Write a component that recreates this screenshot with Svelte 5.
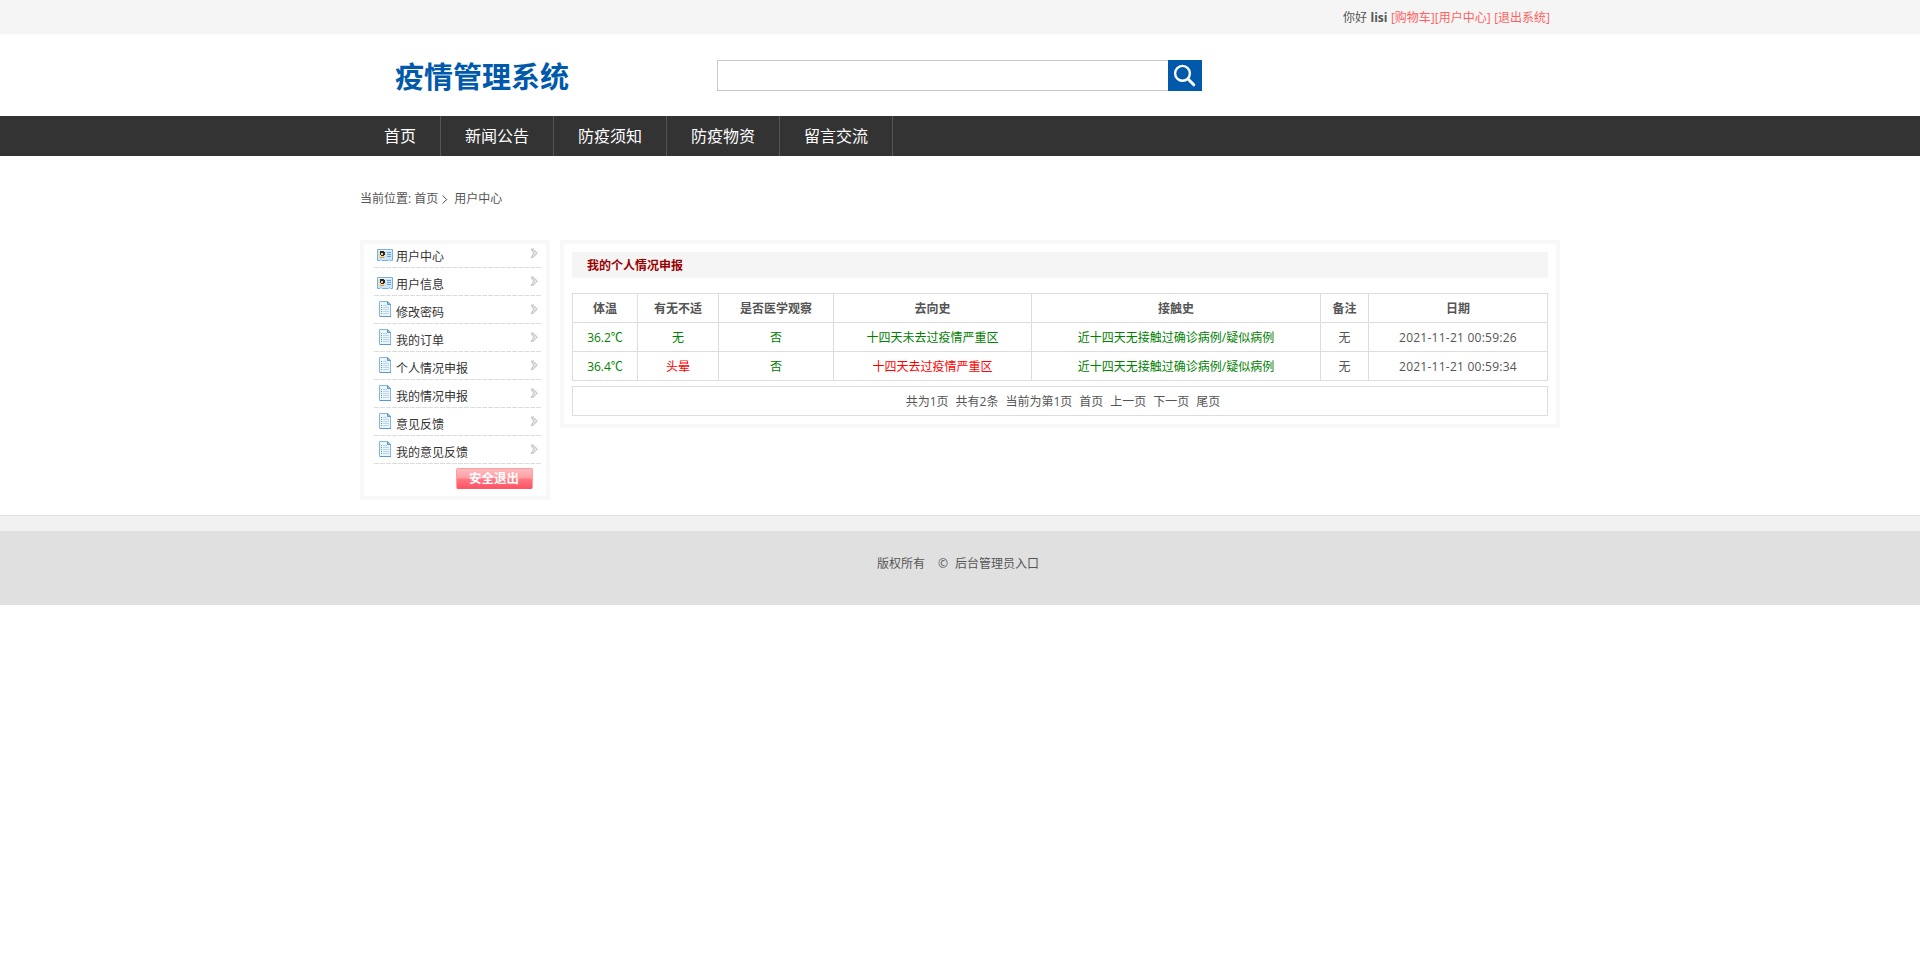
<script lang="ts">
  const nav = ['首页', '新闻公告', '防疫须知', '防疫物资', '留言交流'];

  const menu = [
    { label: '用户中心', icon: 'card' },
    { label: '用户信息', icon: 'card' },
    { label: '修改密码', icon: 'doc' },
    { label: '我的订单', icon: 'doc' },
    { label: '个人情况申报', icon: 'doc' },
    { label: '我的情况申报', icon: 'doc' },
    { label: '意见反馈', icon: 'doc' },
    { label: '我的意见反馈', icon: 'doc' },
  ];

  const columns = ['体温', '有无不适', '是否医学观察', '去向史', '接触史', '备注', '日期'];
  const widths = [65, 81, 115, 198, 289, 48, 180];

  const reports = [
    {
      temp: '36.2℃',
      symptom: '无',
      observed: '否',
      travel: '十四天未去过疫情严重区',
      risky: false,
      contact: '近十四天无接触过确诊病例/疑似病例',
      note: '无',
      date: '2021-11-21 00:59:26',
    },
    {
      temp: '36.4℃',
      symptom: '头晕',
      observed: '否',
      travel: '十四天去过疫情严重区',
      risky: true,
      contact: '近十四天无接触过确诊病例/疑似病例',
      note: '无',
      date: '2021-11-21 00:59:34',
    },
  ];

  const pager = ['共为1页', '共有2条', '当前为第1页', '首页', '上一页', '下一页', '尾页'];
</script>

<div class="topbar">
  <div class="wrap">
    <span>你好</span>
    <b>lisi</b>
    <span class="links"><a href="#cart">[购物车]</a><a href="#user">[用户中心]</a></span>
    <a href="#logout">[退出系统]</a>
  </div>
</div>

<header class="wrap">
  <h1>疫情管理系统</h1>
  <form class="search">
    <input type="text" aria-label="搜索" />
    <button type="button" aria-label="搜索">
      <svg width="34" height="31" viewBox="0 0 34 31" fill="none" stroke="#fff">
        <circle cx="14.5" cy="13.3" r="7.4" stroke-width="2.4" />
        <path d="M20 19 L25.8 24.8" stroke-width="3" stroke-linecap="round" />
      </svg>
    </button>
  </form>
</header>

<nav>
  <ul class="wrap">
    {#each nav as item}
      <li>{item}</li>
    {/each}
  </ul>
</nav>

<div class="crumbs wrap">
  <span>当前位置: 首页</span>
  <svg width="6" height="9" viewBox="0 0 6 9" fill="none" stroke="#444">
    <path d="M.7 .5 L4.7 4.5 L.7 8.5" />
  </svg>
  <span>用户中心</span>
</div>

<div class="content wrap">
  <aside>
    <ul>
      {#each menu as item}
        <li>
          {#if item.icon === 'card'}
            <svg class="icon card" width="16" height="12" viewBox="0 0 16 12">
              <path d="M.5 .5 H15.5 V11.5 H13.5 L12.5 10.5 L11.5 11.5 H5 L4 10.5 L3 11.5 H.5 Z" fill="#cfe6fa" stroke="#78afe2" />
              <path d="M1 1.5 H15" stroke="#eaf5fd" />
              <rect x="2" y="2" width="6" height="7" fill="#e9dcb8" />
              <path d="M3 2 H7 V3 H8 V6 H7 V7 H4 V6 H3 Z" fill="#2e2a28" />
              <rect x="4" y="4" width="2" height="2" fill="#f7cf95" />
              <path d="M3 8.5 H7" stroke="#d99a3f" />
              <path d="M10 3.5 H14 M10 5.5 H14 M10 7.5 H14" stroke="#6ba4d8" />
            </svg>
          {:else}
            <svg class="icon doc" width="12" height="16" viewBox="0 0 12 16">
              <path d="M.5 .5 H8.5 L11.5 3.5 V15.5 H.5 Z" fill="#eaf5fd" stroke="#84b6e4" />
              <path d="M8.5 .5 V3.5 H11.5 Z" fill="#9cc8ef" stroke="#5c97cf" />
              <path d="M4 4.5 H8 M4 6.5 H10 M4 8.5 H10 M4 10.5 H10 M4 12.5 H10" stroke="#bcd4e8" />
              <path d="M2 4.5 H3 M2 6.5 H3 M2 8.5 H3 M2 10.5 H3 M2 12.5 H3" stroke="#4fa56a" />
              <path d="M1 15.5 H12" stroke="#5c97cf" />
            </svg>
          {/if}
          <span>{item.label}</span>
          <svg class="arrow" width="9" height="11" viewBox="0 0 9 11">
            <path d="M1.2 1 H3.2 L7.4 5 L3.2 9.4 H1.2 L3.6 5.2 Z" fill="#e2e2e2" stroke="#b4b4b4" stroke-width=".8" />
          </svg>
        </li>
      {/each}
    </ul>
    <button class="logout" type="button">安全退出</button>
  </aside>

  <main>
    <h2>我的个人情况申报</h2>
    <table>
      <colgroup>
        {#each widths as width}
          <col style="width: {width}px" />
        {/each}
      </colgroup>
      <thead>
        <tr>
          {#each columns as column}
            <th>{column}</th>
          {/each}
        </tr>
      </thead>
      <tbody>
        {#each reports as report}
          <tr>
            <td class="ok">{report.temp}</td>
            <td class={report.symptom === '无' ? 'ok' : 'bad'}>{report.symptom}</td>
            <td class="ok">{report.observed}</td>
            <td class={report.risky ? 'bad' : 'ok'}>{report.travel}</td>
            <td class="ok">{report.contact}</td>
            <td>{report.note}</td>
            <td class="date">{report.date}</td>
          </tr>
        {/each}
      </tbody>
    </table>
    <div class="pager">
      {#each pager as item}
        <span>{item}</span>
      {/each}
    </div>
  </main>
</div>

<footer>
  <div class="strip"></div>
  <div class="copyright">
    <span>版权所有</span>
    <span class="mark">©</span>
    <span>后台管理员入口</span>
  </div>
</footer>

<style>
  :global(body) {
    background: #fff;
    color: #555;
    font: 12px/20px 'Open Sans', 'Noto Sans CJK SC', sans-serif;
  }

  ul {
    margin: 0;
    padding: 0;
    list-style: none;
  }

  .wrap {
    box-sizing: border-box;
    width: 1200px;
    margin: 0 auto;
  }

  .topbar {
    background: #f5f5f5;
  }
  .topbar .wrap {
    display: flex;
    justify-content: flex-end;
    gap: 3.5px;
    height: 34px;
    padding-right: 10px;
    line-height: 36px;
  }
  .topbar a {
    color: #ff5f5f;
    text-decoration: none;
  }

  header {
    display: flex;
    align-items: flex-start;
    height: 82px;
  }
  h1 {
    width: 322px;
    margin: 0;
    padding: 22px 0 0 35px;
    color: #0059ab;
    font-size: 29px;
    line-height: 41px;
  }
  .search {
    display: flex;
    padding-top: 26px;
  }
  .search input {
    box-sizing: border-box;
    width: 451px;
    height: 31px;
    padding: 0 8px;
    border: 1px solid #c8c8c8;
    border-right: 0;
    border-radius: 0;
    outline: 0;
  }
  .search button {
    width: 34px;
    height: 31px;
    padding: 0;
    border: 0;
    background: #0059ab;
  }
  .search svg {
    display: block;
  }

  nav {
    background: #333;
  }
  nav ul {
    display: flex;
  }
  nav li {
    padding: 0 24px;
    border-right: 1px solid #555;
    color: #fff;
    font-size: 16px;
    line-height: 40px;
  }

  .crumbs {
    display: flex;
    align-items: center;
    box-sizing: border-box;
    height: 84px;
    padding-top: 2px;
  }
  .crumbs svg {
    margin: 0 6px 0 4px;
  }

  .content {
    display: flex;
    align-items: flex-start;
    gap: 10px;
  }

  aside,
  main {
    box-sizing: border-box;
    border: 4px solid #f8f8f8;
  }
  aside {
    display: flex;
    flex-direction: column;
    width: 190px;
    height: 260px;
    padding: 0 5px 0 10px;
  }
  aside li {
    display: flex;
    align-items: flex-start;
    box-sizing: border-box;
    width: 167px;
    height: 28px;
    padding-left: 3px;
    background: repeating-linear-gradient(90deg, #ddd 0 5px, transparent 5px 6px) bottom / 100% 1px no-repeat;
    color: #333;
  }
  aside li:first-child {
    height: 24px;
  }
  aside li:first-child .card {
    margin-top: 5px;
  }
  aside li:first-child span {
    padding-top: 3px;
  }
  aside li:first-child .arrow {
    margin-top: 4px;
  }
  aside li span {
    flex: 1;
    padding-top: 7px;
  }
  .card {
    margin: 9px 3px 0 0;
  }
  .doc {
    margin: 5px 5px 0 2px;
  }
  .arrow {
    margin: 8px 2px 0 0;
  }
  .logout {
    align-self: flex-end;
    width: 77px;
    height: 21px;
    margin: 4px 8px 0 0;
    padding: 0 1px 2px 0;
    border: 1px solid #ff9da2;
    border-bottom-color: #ff5866;
    border-radius: 2px;
    background: linear-gradient(#ffbcbe, #ff9da3 48%, #ff7883 52%, #ff5464);
    color: #fff;
    font: bold 12.5px/17px 'Noto Sans CJK SC', sans-serif;
  }

  main {
    width: 1000px;
    height: 188px;
    padding: 8px;
  }
  h2 {
    box-sizing: border-box;
    height: 26px;
    margin: 0 0 15px;
    padding-left: 15px;
    background: #f5f5f5;
    color: #900;
    font-size: 12px;
    line-height: 28px;
  }
  table {
    width: 976px;
    border-top: 1px solid #ddd;
    border-spacing: 0;
    table-layout: fixed;
  }
  th,
  td {
    height: 26px;
    padding: 2px 0 0;
    border: 0 solid #ddd;
    border-width: 0 0 1px 1px;
    text-align: center;
  }
  th:last-child,
  td:last-child {
    border-right-width: 1px;
  }
  .ok {
    color: #008000;
  }
  .bad {
    color: #f00;
  }
  .date {
    letter-spacing: 0.25px;
  }
  .pager {
    display: flex;
    justify-content: center;
    gap: 7px;
    height: 28px;
    margin-top: 5px;
    padding-left: 6px;
    border: 1px solid #ddd;
    line-height: 30px;
  }

  footer {
    margin-top: 15px;
    border-top: 1px solid #ddd;
  }
  .strip {
    height: 15px;
    background: #f1f1f1;
  }
  .copyright {
    display: flex;
    justify-content: center;
    box-sizing: border-box;
    height: 74px;
    padding: 23px 4px 0 0;
    background: #e0e0e0;
  }
  .mark {
    margin: 0 7px 0 13px;
  }
</style>
